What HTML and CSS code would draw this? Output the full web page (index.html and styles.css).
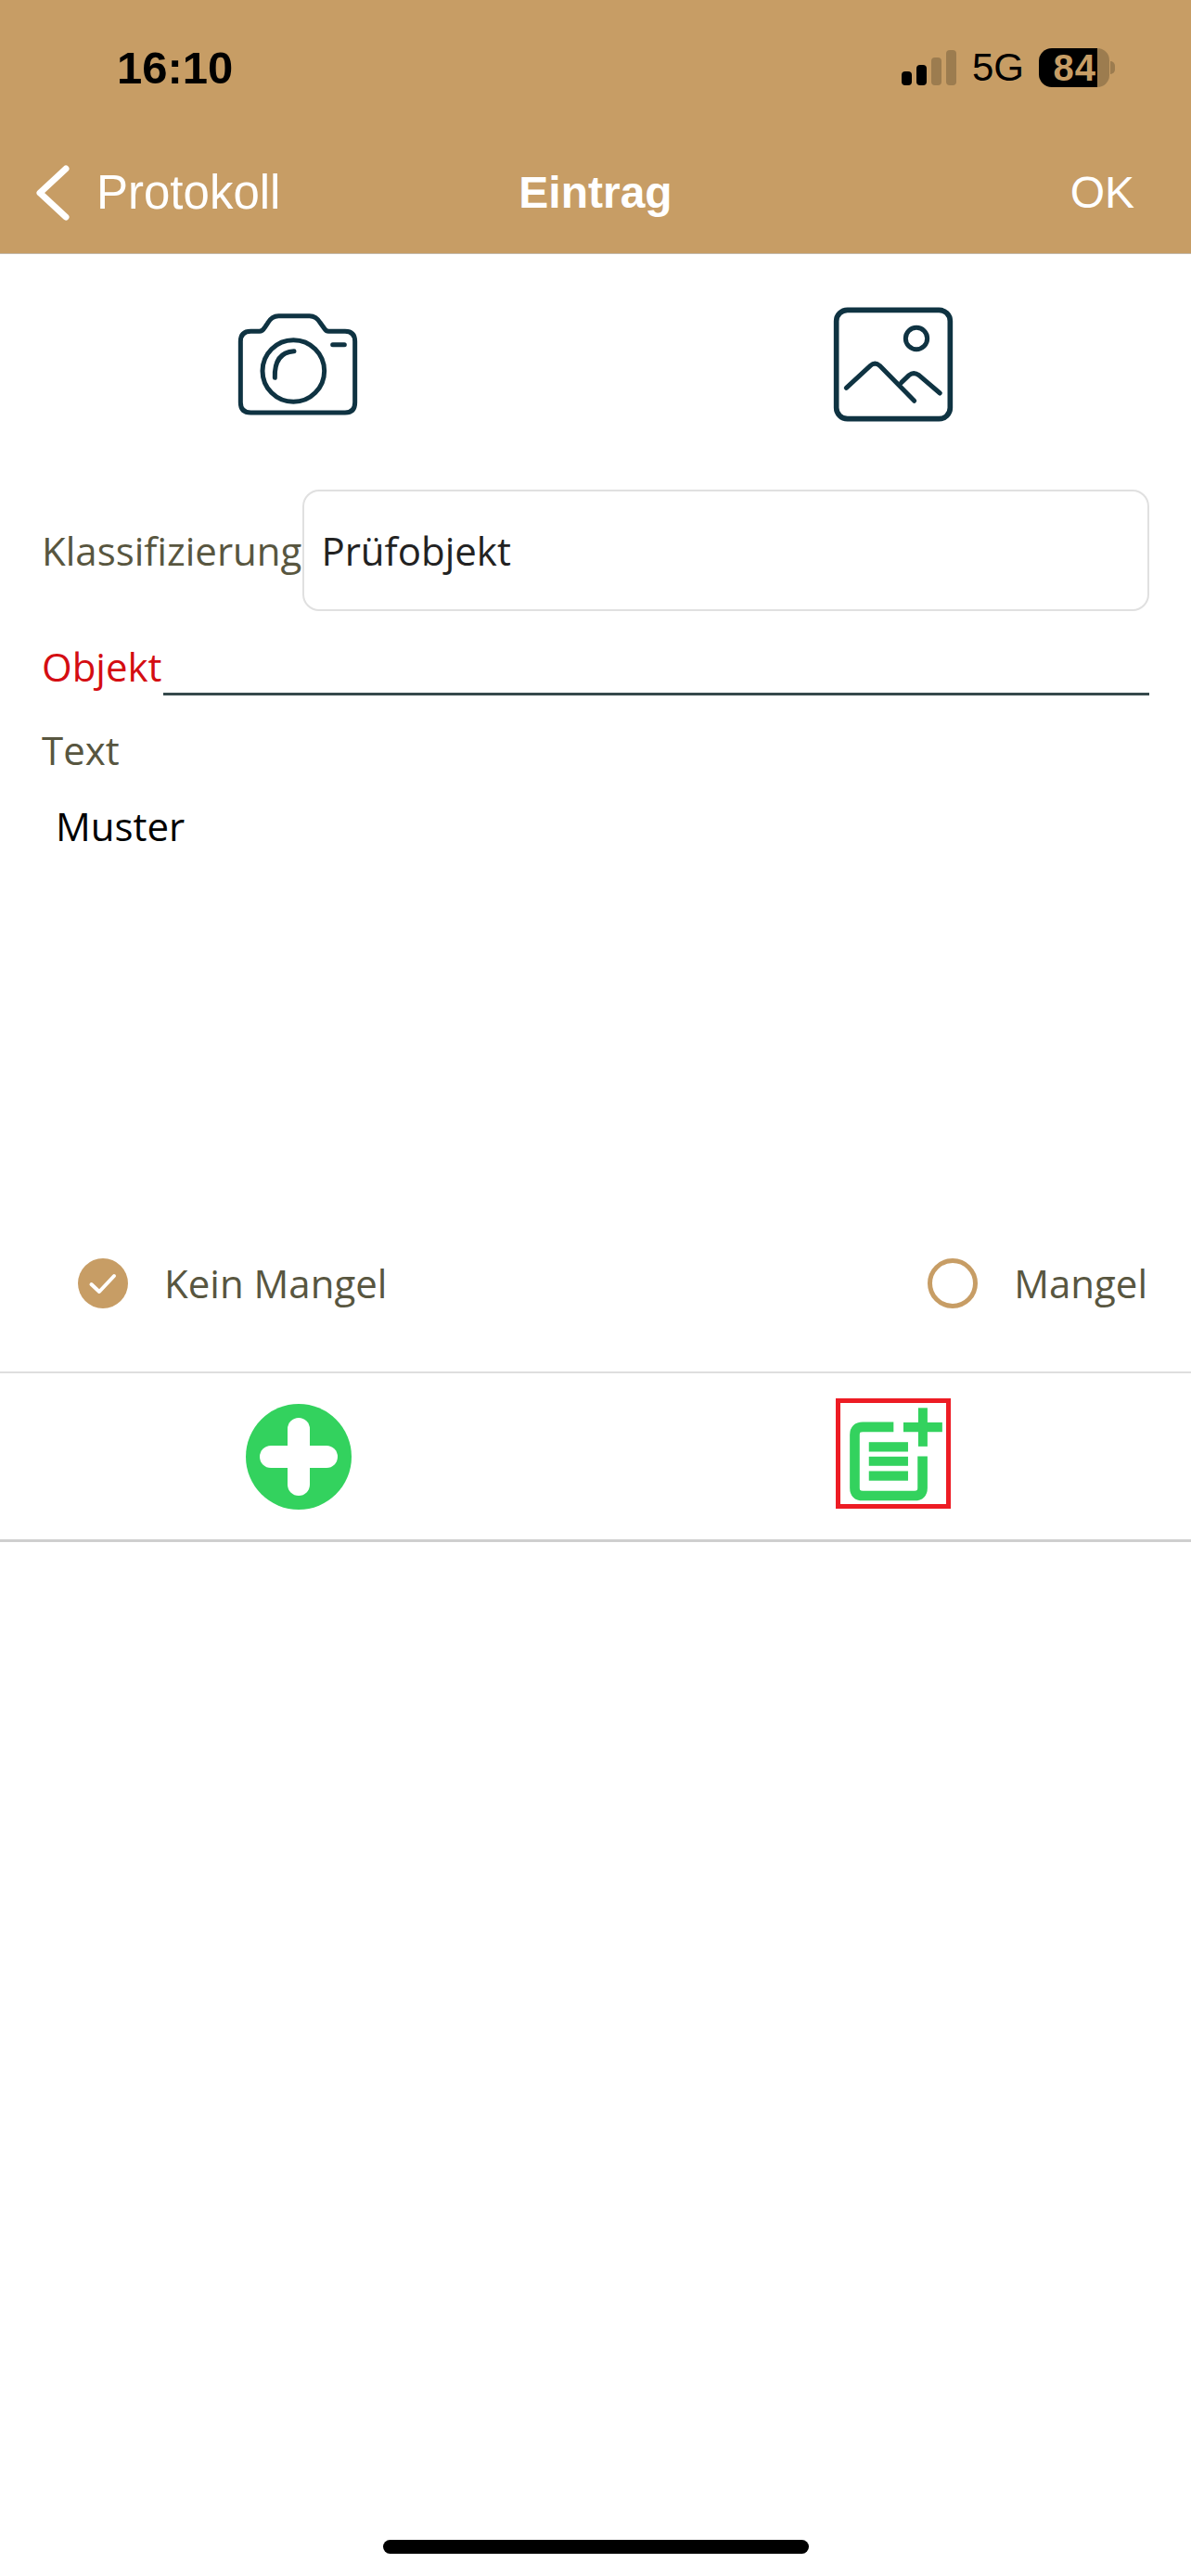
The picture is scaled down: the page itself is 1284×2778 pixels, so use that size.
FILE: index.html
```html
<!DOCTYPE html>
<html lang="de">
<head>
<meta charset="utf-8">
<title>Eintrag</title>
<link rel="stylesheet" href="styles.css">
</head>
<body>
<div class="page">
  <header class="header">
    <div class="status">
      <span class="time">16:10</span>
      <div class="status-right">
        <div class="signal">
          <i class="bar b1"></i><i class="bar b2"></i><i class="bar b3 dim"></i><i class="bar b4 dim"></i>
        </div>
        <span class="net">5G</span>
        <div class="battery">
          <div class="batt-fill">84</div>
          <div class="batt-rest"></div>
          <div class="batt-nub"></div>
        </div>
      </div>
    </div>
    <nav class="nav">
      <div class="nav-left">
        <svg class="chevron" viewBox="0 0 40 60" width="40" height="60"><path d="M34 4 L6 30 L34 56" fill="none" stroke="#fff" stroke-width="7" stroke-linecap="round" stroke-linejoin="round"/></svg>
        <span class="back">Protokoll</span>
      </div>
      <span class="title">Eintrag</span>
      <span class="ok">OK</span>
    </nav>
  </header>

  <section class="media">
    <svg class="media-icon" viewBox="-28 0 660 510" width="220" height="170" fill="none" stroke="#0f3342" stroke-width="15" stroke-linecap="round" stroke-linejoin="round">
      <path d="M150 172 H178 Q188 172 195 160 L205 145 Q218 122 240 122 H340 Q362 122 375 145 L388 163 Q393 172 402 172 H455 Q487 172 487 205 V402 Q487 435 455 435 H150 Q117 435 117 402 V205 Q117 172 150 172 Z"/>
      <circle cx="288" cy="300" r="100"/>
      <path d="M228 322 Q225 240 290 236"/>
      <path d="M415 215 H453"/>
    </svg>
    <svg class="media-icon" viewBox="-21 0 660 510" width="220" height="170" fill="none" stroke="#0f3342" stroke-width="15" stroke-linecap="round" stroke-linejoin="round">
      <rect x="125" y="103" width="368" height="352" rx="36" stroke-width="17"/>
      <circle cx="384" cy="195" r="35"/>
      <path d="M157 355 L235 283 Q250 270 265 283 L377 397"/>
      <path d="M335 338 L360 314 Q375 302 392 314 L460 372"/>
    </svg>
  </section>

  <main class="form">
    <div class="row-class">
      <span class="label">Klassifizierung</span>
      <div class="select">Prüfobjekt</div>
    </div>
    <div class="row-object">
      <span class="label required">Objekt</span>
      <div class="underline"></div>
    </div>
    <div class="label text-label">Text</div>
    <div class="text-value">Muster</div>
  </main>

  <section class="radios">
    <div class="radio">
      <svg class="radio-mark" viewBox="0 0 54 54" width="54" height="54"><circle cx="27" cy="27" r="27" fill="#c79d65"/><path d="M14.5 28 L23 36 L39 19" fill="none" stroke="#fff" stroke-width="4" stroke-linecap="round" stroke-linejoin="round"/></svg>
      <span class="label">Kein Mangel</span>
    </div>
    <div class="radio">
      <svg class="radio-mark" viewBox="0 0 54 54" width="54" height="54"><circle cx="27" cy="27" r="24.5" fill="none" stroke="#c79d65" stroke-width="5"/></svg>
      <span class="label">Mangel</span>
    </div>
  </section>

  <section class="actions">
    <div class="action">
      <svg viewBox="0 0 114 114" width="114" height="114"><circle cx="57" cy="57" r="57" fill="#33d25e"/><rect x="15" y="45" width="84" height="24" rx="12" fill="#fff"/><rect x="45" y="15" width="24" height="84" rx="12" fill="#fff"/></svg>
    </div>
    <div class="action">
      <div class="highlight">
        <svg viewBox="78 70 342 328" width="114" height="109" fill="#33d25e">
          <path d="M250 148 H150 Q124 148 124 174 V345 Q124 371 150 371 H318 Q344 371 344 345 V243" fill="none" stroke="#33d25e" stroke-width="32"/>
          <rect x="170" y="197" width="127" height="31"/>
          <rect x="170" y="244" width="127" height="30"/>
          <rect x="170" y="291" width="127" height="31"/>
          <rect x="282" y="133" width="126" height="31"/>
          <rect x="330" y="86" width="30" height="125"/>
        </svg>
      </div>
    </div>
  </section>

  <div class="home"></div>
</div>
</body>
</html>
```
FILE: styles.css
```css
* { box-sizing: border-box; }
html, body { margin: 0; padding: 0; background: #fff; }
.page {
  width: 1284px;
  height: 2778px;
  display: flex;
  flex-direction: column;
  overflow: hidden;
  font-family: "Open Sans", sans-serif;
}

/* Header */
.header {
  height: 274px;
  background: #c79d65;
  border-bottom: 1px solid #c4b9a8;
  font-family: "Liberation Sans", Arial, sans-serif;
}
.status {
  height: 146px;
  padding: 0 82px 0 126px;
  display: flex;
  align-items: center;
  justify-content: space-between;
}
.time { font-size: 49px; font-weight: 700; color: #000; }
.status-right { display: flex; align-items: center; }
.signal { display: flex; align-items: flex-end; gap: 5px; height: 38px; margin-right: 17px; }
.bar { display: block; width: 11px; background: #000; border-radius: 4px; }
.bar.dim { background: #9c7c4f; }
.b1 { height: 15px; }
.b2 { height: 22px; }
.b3 { height: 30px; }
.b4 { height: 38px; }
.net { font-size: 42px; color: #000; margin-right: 16px; }
.battery { display: flex; align-items: center; }
.batt-fill {
  width: 63px;
  height: 42px;
  background: #000;
  color: #c79d65;
  border-radius: 14px 0 0 14px;
  font-size: 40px;
  font-weight: 700;
  line-height: 42px;
  letter-spacing: 1px;
  text-align: right;
  padding-right: 1px;
}
.batt-rest { width: 13px; height: 42px; background: #9c7c4f; border-radius: 0 14px 14px 0; }
.batt-nub { width: 5px; height: 14px; margin-left: 1px; background: #9c7c4f; border-radius: 0 7px 7px 0; }

.nav {
  height: 127px;
  padding: 0 61px 4px 37px;
  display: flex;
  align-items: center;
  justify-content: space-between;
  position: relative;
  color: #fff;
}
.nav-left { display: flex; align-items: center; gap: 27px; }
.back { font-size: 51px; font-weight: 400; }
.ok { font-size: 48px; font-weight: 400; }
.title {
  position: absolute;
  left: 0;
  right: 0;
  text-align: center;
  font-size: 48px;
  font-weight: 700;
}

/* Media buttons */
.media {
  padding-top: 26px;
  display: grid;
  grid-template-columns: 1fr 1fr;
  justify-items: center;
}
.media-icon { display: block; }

/* Form */
.form { padding: 58px 45px 0 45px; height: 885px; }
.label { font-size: 42px; line-height: 58px; color: #585640; }
.row-class { display: flex; align-items: center; height: 131px; }
.select {
  flex: 1;
  height: 131px;
  margin-left: 1px;
  padding-left: 18px;
  border: 2px solid #e0e0e0;
  border-radius: 18px;
  display: flex;
  align-items: center;
  font-size: 42px;
  color: #222;
}
.row-object { display: flex; margin-top: 31px; height: 60px; }
.required { color: #d40d12; }
.underline { flex: 1; margin-left: 1px; border-bottom: 3px solid #36494c; }
.text-label { margin-top: 30px; }
.text-value { margin-top: 24px; margin-left: 15px; font-size: 42px; line-height: 58px; color: #000; }

/* Radios */
.radios {
  height: 124px;
  padding: 0 47px 0 84px;
  display: flex;
  align-items: flex-start;
  justify-content: space-between;
}
.radio { display: flex; align-items: center; height: 58px; }
.radio-mark { display: block; margin-right: 39px; }

/* Actions */
.actions {
  height: 184px;
  border-top: 2px solid #dedede;
  border-bottom: 3px solid #cfcfcf;
  display: grid;
  grid-template-columns: 1fr 1fr;
  justify-items: center;
  align-items: start;
}
.action { display: flex; justify-content: center; padding: 33px 0 0 1px; }
.action:last-child { padding: 27px 0 0; }
.highlight { border: 5px solid #ed1c24; width: 124px; height: 119px; }
.highlight svg { display: block; }

/* Home indicator */
.home {
  width: 459px;
  height: 15px;
  margin: auto auto 24px;
  background: #000;
  border-radius: 8px;
}
```
